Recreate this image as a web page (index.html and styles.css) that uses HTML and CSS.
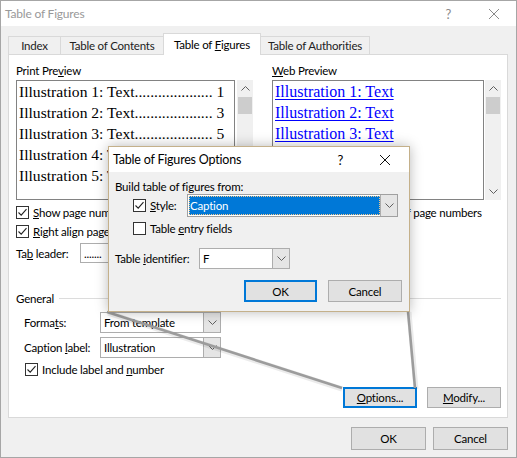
FILE: index.html
```html
<!DOCTYPE html>
<html>
<head>
<meta charset="utf-8">
<link rel="stylesheet" href="styles.css">
</head>
<body>
<div class="win">
  <div class="titlebar">
    <span class="title">Table of Figures</span>
    <span class="tb-help">?</span>
    <svg class="tb-close" width="12" height="12" viewBox="0 0 12 12"><path d="M1 1 L11 11 M11 1 L1 11" stroke="#8a8a8a" stroke-width="1" fill="none"/></svg>
  </div>
  <div class="client">
    <div class="tabs">
      <div class="tab t-index"><span>Index</span></div>
      <div class="tab t-toc"><span>Table of Contents</span></div>
      <div class="tab t-tof active"><span>Table of <u>F</u>igures</span></div>
      <div class="tab t-toa"><span>Table of Authorities</span></div>
    </div>
    <div class="panel">
      <div class="cols">
        <div class="col col-left">
          <div class="lbl">Print Pre<u>v</u>iew</div>
          <div class="listwrap">
            <div class="listbox print">
              <div class="entry">Illustration 1: Text.................... 1</div>
              <div class="entry">Illustration 2: Text.................... 3</div>
              <div class="entry">Illustration 3: Text.................... 5</div>
              <div class="entry">Illustration 4: Text.................... 7</div>
              <div class="entry">Illustration 5: Text.................... 9</div>
            </div>
            <div class="scroll">
              <div class="sb-btn"><svg width="9" height="5" viewBox="0 0 9 5"><path d="M0.5 4.5 L4.5 0.5 L8.5 4.5" stroke="#606060" fill="none"/></svg></div>
              <div class="sb-thumb"></div>
              <div class="sb-space"></div>
              <div class="sb-btn"><svg width="9" height="5" viewBox="0 0 9 5"><path d="M0.5 0.5 L4.5 4.5 L8.5 0.5" stroke="#606060" fill="none"/></svg></div>
            </div>
          </div>
          <div class="check first"><span class="cb on"><svg width="11" height="11" viewBox="0 0 11 11"><path d="M1.5 5.5 L4.2 8.2 L9.5 2.2" stroke="#222" stroke-width="1.1" fill="none"/></svg></span><span><u>S</u>how page numbers</span></div>
          <div class="check"><span class="cb on"><svg width="11" height="11" viewBox="0 0 11 11"><path d="M1.5 5.5 L4.2 8.2 L9.5 2.2" stroke="#222" stroke-width="1.1" fill="none"/></svg></span><span><u>R</u>ight align page numbers</span></div>
          <div class="leader-row"><span class="ll">Ta<u>b</u> leader:</span><div class="combo c-leader"><span class="val">.......</span><span class="dd"><svg width="9" height="5" viewBox="0 0 9 5"><path d="M0.5 0.5 L4.5 4.5 L8.5 0.5" stroke="#606060" fill="none"/></svg></span></div></div>
        </div>
        <div class="col col-right">
          <div class="lbl"><u>W</u>eb Preview</div>
          <div class="listwrap">
            <div class="listbox web">
              <div class="link">Illustration 1: Text</div>
              <div class="link">Illustration 2: Text</div>
              <div class="link">Illustration 3: Text</div>
              <div class="link">Illustration 4: Text</div>
              <div class="link">Illustration 5: Text</div>
            </div>
            <div class="scroll">
              <div class="sb-btn"><svg width="9" height="5" viewBox="0 0 9 5"><path d="M0.5 4.5 L4.5 0.5 L8.5 4.5" stroke="#606060" fill="none"/></svg></div>
              <div class="sb-thumb"></div>
              <div class="sb-space"></div>
              <div class="sb-btn"><svg width="9" height="5" viewBox="0 0 9 5"><path d="M0.5 0.5 L4.5 4.5 L8.5 0.5" stroke="#606060" fill="none"/></svg></div>
            </div>
          </div>
          <div class="check first"><span class="cb on"><svg width="11" height="11" viewBox="0 0 11 11"><path d="M1.5 5.5 L4.2 8.2 L9.5 2.2" stroke="#222" stroke-width="1.1" fill="none"/></svg></span><span>Use <u>h</u>yperlinks instead of page numbers</span></div>
        </div>
      </div>
      <div class="general"><span>General</span><span class="rule"></span></div>
      <div class="frow f-first"><span class="flbl">Forma<u>t</u>s:</span><div class="combo c-gen"><span class="val">From template</span><span class="dd"><svg width="9" height="5" viewBox="0 0 9 5"><path d="M0.5 0.5 L4.5 4.5 L8.5 0.5" stroke="#606060" fill="none"/></svg></span></div></div>
      <div class="frow"><span class="flbl">Caption <u>l</u>abel:</span><div class="combo c-gen"><span class="val">Illustration</span><span class="dd"><svg width="9" height="5" viewBox="0 0 9 5"><path d="M0.5 0.5 L4.5 4.5 L8.5 0.5" stroke="#606060" fill="none"/></svg></span></div></div>
      <div class="check incl"><span class="cb on"><svg width="11" height="11" viewBox="0 0 11 11"><path d="M1.5 5.5 L4.2 8.2 L9.5 2.2" stroke="#222" stroke-width="1.1" fill="none"/></svg></span><span>Include label and <u>n</u>umber</span></div>
      <div class="btnrow">
        <div class="btn focus"><span><u>O</u>ptions...</span></div>
        <div class="btn"><span><u>M</u>odify...</span></div>
      </div>
    </div>
    <div class="footer">
      <div class="btn fb">OK</div>
      <div class="btn fb">Cancel</div>
    </div>
  </div>

  <svg class="callout" width="517" height="458" viewBox="0 0 517 458">
    <g stroke="#000" stroke-opacity="0.08" stroke-width="5" fill="none">
      <path d="M108 313 L342 389"/>
      <path d="M409 312 L416 389"/>
    </g>
    <g stroke="#9c9c9c" stroke-width="2.6" fill="none">
      <path d="M107 312 L342 388"/>
      <path d="M408 311 L415 388"/>
    </g>
  </svg>

  <div class="dlg">
    <div class="dlg-title">
      <span class="dt">Table of Figures Options</span>
      <span class="dh">?</span>
      <svg class="dx" width="12" height="12" viewBox="0 0 12 12"><path d="M1 1 L11 11 M11 1 L1 11" stroke="#111" stroke-width="1" fill="none"/></svg>
    </div>
    <div class="dlg-body">
      <div class="dl">Build table of figures from:</div>
      <div class="drow d-style">
        <span class="cb on"><svg width="11" height="11" viewBox="0 0 11 11"><path d="M1.5 5.5 L4.2 8.2 L9.5 2.2" stroke="#222" stroke-width="1.1" fill="none"/></svg></span>
        <span class="sl"><u>S</u>tyle:</span>
        <div class="combo c-style"><span class="val sel">Caption</span><span class="dd"><svg width="9" height="5" viewBox="0 0 9 5"><path d="M0.5 0.5 L4.5 4.5 L8.5 0.5" stroke="#606060" fill="none"/></svg></span></div>
      </div>
      <div class="drow d-entry"><span class="cb"></span><span class="sl">Table <u>e</u>ntry fields</span></div>
      <div class="drow d-ident"><span class="il">Table <u>i</u>dentifier:</span><div class="combo c-ident"><span class="val">F</span><span class="dd"><svg width="9" height="5" viewBox="0 0 9 5"><path d="M0.5 0.5 L4.5 4.5 L8.5 0.5" stroke="#606060" fill="none"/></svg></span></div></div>
      <div class="dbtns">
        <div class="btn focus d-ok">OK</div>
        <div class="btn d-cancel">Cancel</div>
      </div>
    </div>
  </div>
</div>
</body>
</html>
```

FILE: styles.css
```css
* { box-sizing: border-box; }
html, body { margin: 0; padding: 0; background: #fff; }
body { font-family: Lato, "Liberation Sans", sans-serif; font-size: 11.5px; letter-spacing: -0.2px; color: #000; }
u { text-decoration: underline; text-underline-offset: 1px; }

.win {
  position: relative;
  width: 517px; height: 458px;
  background: #f0f0f0;
  border: 1px solid #a6a6a6;
  overflow: hidden;
}
.titlebar {
  height: 25px; background: #fff;
  display: flex; align-items: center;
  padding-left: 4px;
}
.title { color: #999; font-size: 12px; flex: 1; }
.tb-help { color: #8a8a8a; font-size: 13px; margin-right: 37px; }
.tb-close { margin-right: 16px; }

.client { padding: 7px 0 0 7px; }
.tabs { display: flex; height: 21px; align-items: flex-end; position: relative; z-index: 2; }
.tab {
  height: 18px; border: 1px solid #d9d9d9; border-bottom: none;
  background: #f0f0f0; color: #222;
  display: flex; align-items: center; justify-content: center;
  margin-right: -1px; white-space: nowrap;
}
.t-index { width: 53px; }
.t-toc { width: 104px; }
.t-tof { width: 98px; }
.t-toa { width: 110px; }
.tab.active { height: 22px; margin-bottom: -1px; background: #fff; position: relative; z-index: 3; color: #000; border-color: #d9d9d9; }

.panel {
  width: 500px; height: 364px;
  border: 1px solid #d9d9d9; background: #fff;
  padding: 8px 6px 0 7px;
  position: relative; z-index: 1;
}
.cols { display: flex; }
.col-left { width: 237px; }
.col-right { width: 229px; margin-left: 19px; }
.lbl { height: 16px; line-height: 16px; margin-bottom: 1px; }
.listwrap { display: flex; height: 120px; }
.listbox { border: 1px solid #828282; background: #fff; overflow: hidden; padding-left: 2px; }
.print { width: 219px; }
.web { width: 212px; }
.scroll { width: 16px; margin-left: 2px; background: #f0f0f0; display: flex; flex-direction: column; }
.col-right .scroll { margin-left: 1px; }
.sb-btn { height: 17px; display: flex; align-items: center; justify-content: center; }
.sb-thumb { height: 17px; background: #cdcdcd; margin: 0 1px; }
.sb-space { flex: 1; }

.entry, .link {
  font-family: "Liberation Serif", serif; font-size: 16px; line-height: 21px;
  letter-spacing: 0; white-space: nowrap;
}
.entry { font-size: 15.6px; }
.link { color: #0000ff; text-decoration: underline; text-underline-offset: 2px; }

.check { display: flex; align-items: center; height: 19px; white-space: nowrap; }
.check.first { margin-top: 3px; }
.cb {
  width: 13px; height: 13px; border: 1px solid #333; background: #fff;
  display: inline-flex; align-items: center; justify-content: center;
  margin-right: 4px; flex: none;
}
.leader-row { display: flex; align-items: center; margin-top: 2px; height: 20px; }
.ll { width: 64px; }
.combo {
  display: flex; border: 1px solid #adadad; background: #fff; align-items: stretch;
}
.combo .val { flex: 1; padding-left: 3px; display: flex; align-items: center; white-space: nowrap; overflow: hidden; }
.combo .dd { width: 17px; background: #e5e5e5; border-left: 1px solid #adadad; display: flex; align-items: center; justify-content: center; }
.c-leader { width: 140px; height: 20px; }

.general { display: flex; align-items: center; height: 16px; margin-top: 27px; }
.general .rule { flex: 1; height: 1px; background: #dcdcdc; margin-left: 5px; }
.frow { display: flex; align-items: center; padding-left: 8px; margin-top: 4px; }
.frow.f-first { margin-top: 6px; }
.flbl { width: 76px; }
.c-gen { width: 121px; height: 21px; }
.check.incl { margin-left: 9px; margin-top: 2px; }

.btn {
  height: 21px; background: #e1e1e1; border: 1px solid #adadad;
  display: flex; align-items: center; justify-content: center; white-space: nowrap;
}
.btn.focus { border: 2px solid #0078d7; }
.btnrow { display: flex; justify-content: flex-end; gap: 10px; margin-top: 8px; }
.btnrow .btn { width: 74px; }

.footer { display: flex; justify-content: flex-end; gap: 7px; margin-top: 9px; padding-right: 8px; }
.fb { width: 75px; height: 23px; }

.callout { position: absolute; left: -1px; top: -1px; z-index: 4; pointer-events: none; }

.dlg {
  position: absolute; left: 107px; top: 145px; width: 302px; height: 166px;
  border: 1px solid #c4b08a; background: #f0f0f0; z-index: 5;
  box-shadow: 0 0 12px rgba(0,0,0,0.28);
}
.dlg-title { height: 25px; background: #fff; display: flex; align-items: center; padding-left: 4px; }
.dt { flex: 1; font-size: 12.5px; }
.dh { font-size: 13px; margin-right: 36px; }
.dx { margin-right: 18px; }
.dlg-body { padding: 7px 7px 0 6px; }
.dl { height: 16px; line-height: 16px; }
.drow { display: flex; align-items: center; }
.d-style { height: 23px; margin-top: -1px; padding-left: 18px; }
.d-style .sl { width: 37px; }
.c-style { width: 211px; height: 23px; border-color: #a0a0a0; }
.c-style .val { padding: 2px; }
.c-style .val.sel { background: #0078d7; color: #fff; outline: 1px dotted #f3c88a; outline-offset: -1px; margin: 1px 0 1px 1px; padding-left: 1px; }
.d-entry { height: 18px; margin-top: 2px; padding-left: 18px; }
.d-ident { margin-top: 11px; height: 21px; }
.il { width: 84px; }
.c-ident { width: 91px; height: 21px; }
.dbtns { display: flex; justify-content: flex-end; gap: 11px; margin-top: 11px; }
.d-ok { width: 73px; height: 22px; }
.d-cancel { width: 74px; height: 22px; }
```
